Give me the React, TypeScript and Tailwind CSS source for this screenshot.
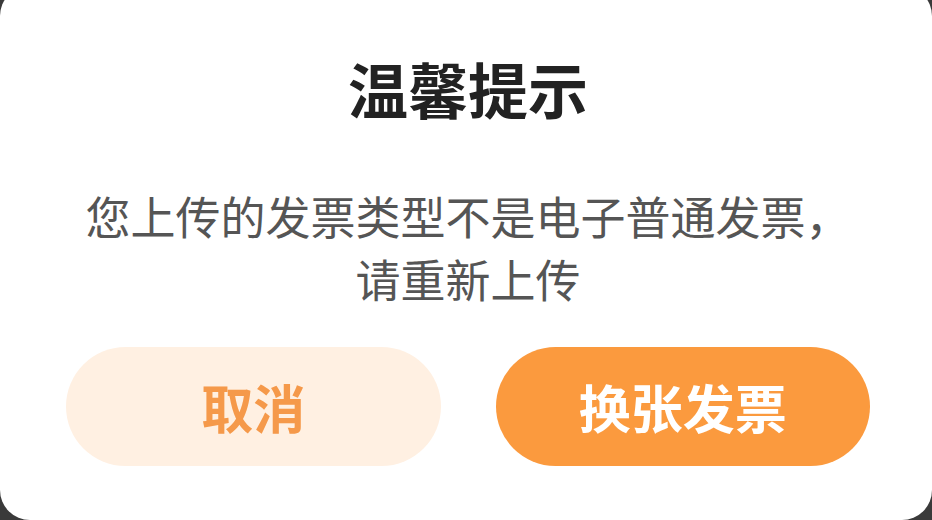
export default function App() {
  return (
    <div className="w-[932px] h-[520px] overflow-hidden bg-[#3a3a3a]">
      <div
        className="-mt-[14px] h-[534px] bg-white rounded-[30px] flex flex-col items-center pl-[66px] pr-[62px]"
        style={{ fontFamily: '"Noto Sans CJK SC", "Noto Sans", sans-serif' }}
      >
        <h1 className="mt-[72px] text-[60px] leading-none font-bold text-[#222222]">温馨提示</h1>
        <p className="mt-[66px] text-[45px] leading-[63px] text-[#555555] text-center">
          您上传的发票类型不是电子普通发票，
          <br />
          请重新上传
        </p>
        <div className="mt-[37px] w-full flex gap-[55px]">
          <button className="flex-1 h-[119px] rounded-full bg-[#fff0e2] text-[#f5994a] text-[52px] font-bold leading-none">
            取消
          </button>
          <button className="flex-1 h-[119px] rounded-full bg-[#fb9a3e] text-white text-[52px] font-bold leading-none">
            换张发票
          </button>
        </div>
      </div>
    </div>
  );
}
